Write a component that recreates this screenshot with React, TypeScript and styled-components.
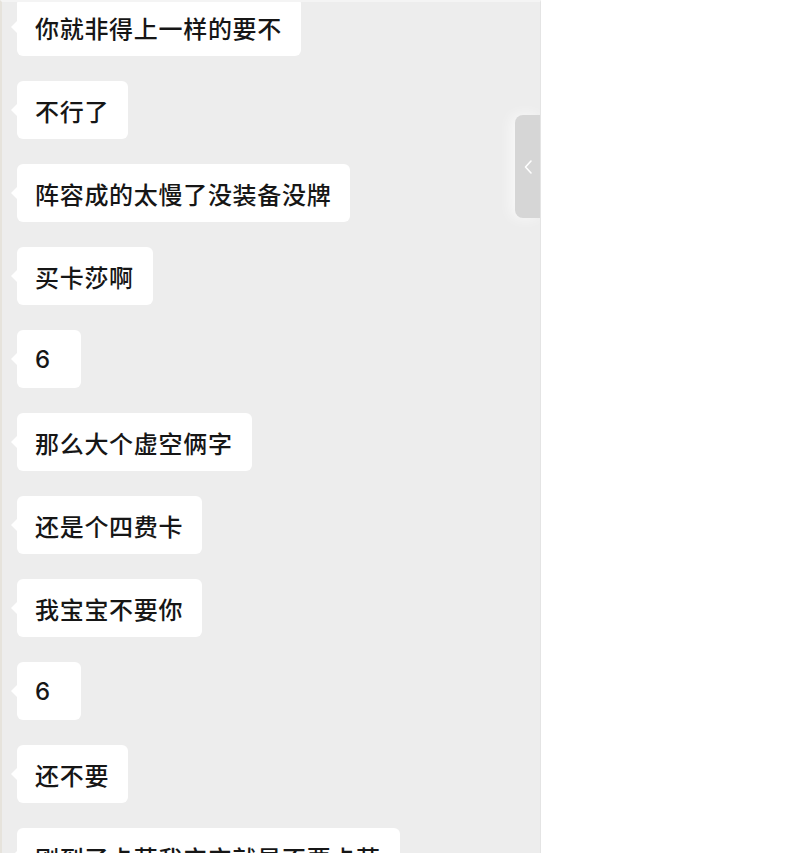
import React from "react";
import styled, { createGlobalStyle } from "styled-components";

const GlobalStyle = createGlobalStyle`
  html, body {
    margin: 0;
    padding: 0;
    background: #ffffff;
  }
  body {
    font-family: "Noto Sans CJK SC", "Noto Sans", sans-serif;
  }
`;

const Page = styled.div`
  display: flex;
  width: 800px;
  height: 853px;
  overflow: hidden;
  background: #ffffff;
`;

const ChatPane = styled.div`
  position: relative;
  width: 541px;
  height: 853px;
  flex: none;
  overflow: hidden;
  background: #ededed;
  border-top: 2px solid #f4f4f4;
  border-left: 2px solid #e6e3dc;
  border-right: 1px solid #e4e4e4;
  box-sizing: border-box;
`;

const MessageList = styled.div`
  display: flex;
  flex-direction: column;
  align-items: flex-start;
  gap: 25px;
  padding-left: 15px;
  margin-top: -4px;
`;

const Bubble = styled.div`
  position: relative;
  display: flex;
  align-items: center;
  box-sizing: border-box;
  height: 58px;
  min-width: 64px;
  padding: 0 19px 0 18px;
  background: #ffffff;
  border-radius: 6px;
  color: #161616;
  font-family: "Inter", "Noto Sans CJK SC", sans-serif;
  font-size: 24px;
  font-weight: 500;
  letter-spacing: 0.7px;
  white-space: nowrap;

  &::before {
    content: "";
    position: absolute;
    left: -6px;
    top: 50%;
    margin-top: -6px;
    border-style: solid;
    border-width: 6px 6px 6px 0;
    border-color: transparent #ffffff transparent transparent;
  }
`;

const DrawerTab = styled.div`
  position: absolute;
  right: -1px;
  top: 113px;
  width: 26px;
  height: 103px;
  display: flex;
  align-items: center;
  justify-content: center;
  background: #d6d6d6;
  border-radius: 8px 0 0 8px;
  box-shadow: -4px 0 14px rgba(255, 255, 255, 0.7);
`;

const messages = [
  "你就非得上一样的要不",
  "不行了",
  "阵容成的太慢了没装备没牌",
  "买卡莎啊",
  "6",
  "那么大个虚空俩字",
  "还是个四费卡",
  "我宝宝不要你",
  "6",
  "还不要",
  "刚到了卡莎我宝宝就是不要卡莎",
];

export default function App() {
  return (
    <>
      <GlobalStyle />
      <Page>
        <ChatPane>
          <MessageList>
            {messages.map((text, i) => (
              <Bubble key={i}>{text}</Bubble>
            ))}
          </MessageList>
          <DrawerTab>
            <svg width="10" height="16" viewBox="0 0 10 16" fill="none">
              <path
                d="M8 2 L2.5 8 L8 14"
                stroke="#ffffff"
                strokeWidth="1.6"
                strokeLinecap="round"
                strokeLinejoin="round"
              />
            </svg>
          </DrawerTab>
        </ChatPane>
      </Page>
    </>
  );
}
